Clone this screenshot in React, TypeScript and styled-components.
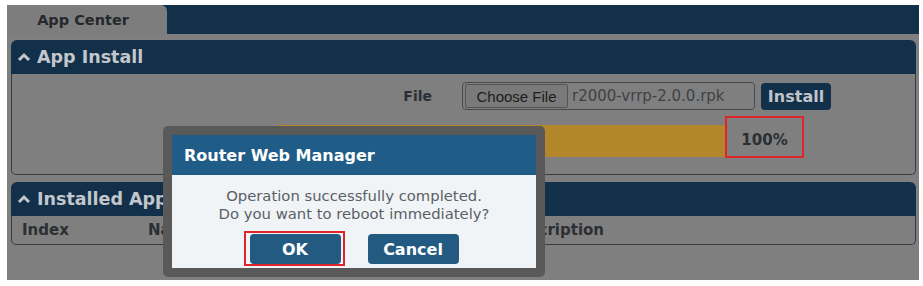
import styled, { createGlobalStyle } from "styled-components";

const GlobalStyle = createGlobalStyle`
  body {
    margin: 0;
    background: #ffffff;
    font-family: "DejaVu Sans", Verdana, sans-serif;
  }
`;

const Page = styled.div`
  position: relative;
  margin: 5px 0 0 7px;
  width: 912px;
  height: 275px;
  background: #7f7f7f;
`;

const TabBar = styled.div`
  display: flex;
  height: 29px;
  background: #13304a;
`;

const Tab = styled.div`
  width: 160px;
  display: flex;
  align-items: center;
  justify-content: center;
  padding-right: 8px;
  box-sizing: border-box;
  background: #7d7d7d;
  border-top-right-radius: 6px;
  font-weight: bold;
  font-size: 14.5px;
  color: #24282c;
`;

const Content = styled.div`
  display: flex;
  flex-direction: column;
  gap: 7px;
  padding: 6px 3px 0 4px;
`;

const Panel = styled.section`
  display: flex;
  flex-direction: column;
`;

const PanelHeader = styled.div`
  display: flex;
  align-items: center;
  gap: 6px;
  height: 34px;
  padding-left: 6px;
  background: #13304a;
  border-radius: 6px 6px 0 0;
  font-weight: bold;
  font-size: 17.5px;
  color: #c3c7cc;
`;

const PanelBody = styled.div<{ $pad: string }>`
  padding: ${(p) => p.$pad};
  border: 1px solid #3a3d40;
  border-top: none;
  border-radius: 0 0 5px 5px;
`;

const FormRow = styled.div`
  display: flex;
  align-items: center;
  gap: 30px;
`;

const Label = styled.div`
  width: 420px;
  text-align: right;
  font-weight: bold;
  font-size: 14px;
  color: #2b2f33;
`;

const FileBox = styled.div`
  display: flex;
  align-items: center;
  gap: 4px;
  width: 293px;
  height: 28px;
  padding-left: 2px;
  box-sizing: border-box;
  border: 1px solid #4a4a4a;
  border-radius: 4px;
`;

const ChooseButton = styled.div`
  width: 103px;
  height: 24px;
  box-sizing: border-box;
  display: flex;
  align-items: center;
  justify-content: center;
  background: #7a7a7a;
  border: 1px solid #555;
  border-radius: 2px;
  font-family: "Liberation Sans", Arial, sans-serif;
  font-size: 15px;
  color: #1c1c1c;
`;

const FileName = styled.span`
  font-size: 15px;
  color: #3e4246;
`;

const NavyButton = styled.div`
  margin-left: -24px;
  width: 70px;
  height: 27px;
  display: flex;
  align-items: center;
  justify-content: center;
  background: #13304a;
  border-radius: 4px;
  font-weight: bold;
  font-size: 16px;
  color: #c0c4c9;
`;

const ProgressRow = styled.div`
  display: flex;
  align-items: flex-start;
  margin-top: 6px;
  padding-left: 265px;
`;

const ProgressTrack = styled.div`
  width: 448px;
  height: 32px;
  margin-top: 9px;
  background: #b4862b;
`;

const Percent = styled.div`
  width: 79px;
  height: 42px;
  box-sizing: border-box;
  display: flex;
  align-items: center;
  justify-content: center;
  padding-top: 6px;
  border: 2px solid #e0252a;
  font-weight: bold;
  font-size: 15px;
  color: #2b2f33;
`;

const TableHead = styled.div`
  display: grid;
  grid-template-columns: 126px 359px 1fr;
  align-items: center;
  height: 28px;
  padding-left: 10px;
  font-weight: bold;
  font-size: 15px;
  color: #2b2f33;
`;

const Dialog = styled.div`
  position: absolute;
  left: 156px;
  top: 121px;
  width: 382px;
  height: 151px;
  box-sizing: border-box;
  padding: 9px;
  background: #595959;
  border-radius: 5px;
`;

const DialogTitle = styled.div`
  height: 40px;
  display: flex;
  align-items: center;
  padding-left: 12px;
  background: #1f5d88;
  font-weight: bold;
  font-size: 16px;
  color: #ffffff;
`;

const DialogBody = styled.div`
  height: 93px;
  box-sizing: border-box;
  padding-top: 12px;
  background: #f1f4f7;
  text-align: center;
  font-size: 14.8px;
  line-height: 18px;
  color: #5a6065;
`;

const ButtonRow = styled.div`
  display: flex;
  justify-content: center;
  gap: 27px;
  margin-top: 11px;
`;

const DialogButton = styled.button<{ $marked?: boolean }>`
  position: relative;
  width: 91px;
  height: 30px;
  border: none;
  border-radius: 4px;
  background: #225a82;
  font-family: "DejaVu Sans", Verdana, sans-serif;
  font-weight: bold;
  font-size: 16px;
  color: #ffffff;

  &::after {
    content: "";
    display: ${(p) => (p.$marked ? "block" : "none")};
    position: absolute;
    left: -6px;
    right: -4px;
    top: -3px;
    bottom: -2px;
    border: 2px solid #e0252a;
  }
`;

const Caret = () => (
  <svg width="14" height="10" viewBox="0 0 14 10">
    <path d="M2 8 L7 3 L12 8" fill="none" stroke="currentColor" strokeWidth="3" />
  </svg>
);

export default function App() {
  return (
    <>
      <GlobalStyle />
      <Page>
        <TabBar>
          <Tab>App Center</Tab>
        </TabBar>
        <Content>
          <Panel>
            <PanelHeader>
              <Caret />
              App Install
            </PanelHeader>
            <PanelBody $pad="8px 0 16px 0">
              <FormRow>
                <Label>File</Label>
                <FileBox>
                  <ChooseButton>Choose File</ChooseButton>
                  <FileName>r2000-vrrp-2.0.0.rpk</FileName>
                </FileBox>
                <NavyButton>Install</NavyButton>
              </FormRow>
              <ProgressRow>
                <ProgressTrack />
                <Percent>100%</Percent>
              </ProgressRow>
            </PanelBody>
          </Panel>
          <Panel>
            <PanelHeader>
              <Caret />
              Installed Apps
            </PanelHeader>
            <PanelBody $pad="0">
              <TableHead>
                <span>Index</span>
                <span>Name</span>
                <span>Description</span>
              </TableHead>
            </PanelBody>
          </Panel>
        </Content>
        <Dialog>
          <DialogTitle>Router Web Manager</DialogTitle>
          <DialogBody>
            Operation successfully completed.
            <br />
            Do you want to reboot immediately?
            <ButtonRow>
              <DialogButton $marked>OK</DialogButton>
              <DialogButton>Cancel</DialogButton>
            </ButtonRow>
          </DialogBody>
        </Dialog>
      </Page>
    </>
  );
}
